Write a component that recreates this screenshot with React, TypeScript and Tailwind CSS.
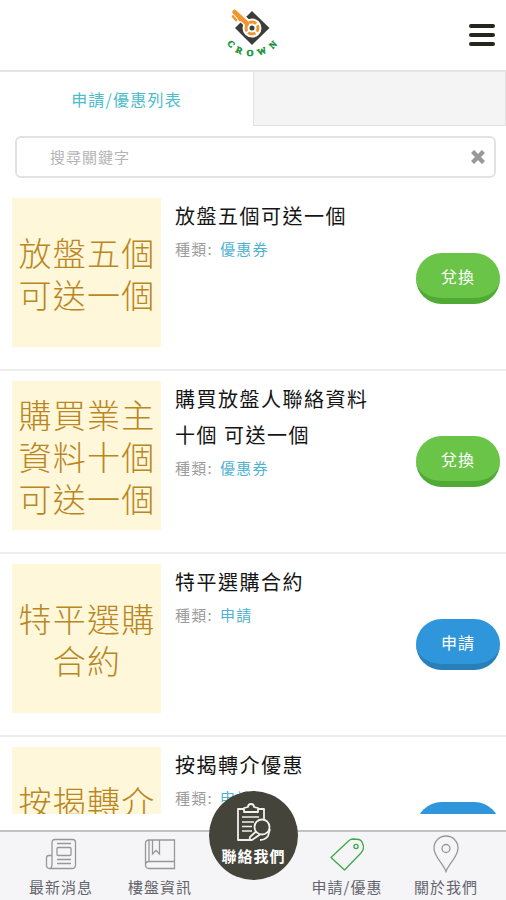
import React from 'react';
import clsx from 'clsx';

interface Offer {
  id: number;
  thumb: string[];
  title: string[];
  category: string;
  action: string;
  variant: 'green' | 'blue';
}

const offers: Offer[] = [
  { id: 1, thumb: ['放盤五個', '可送一個'], title: ['放盤五個可送一個'], category: '優惠券', action: '兌換', variant: 'green' },
  { id: 2, thumb: ['購買業主', '資料十個', '可送一個'], title: ['購買放盤人聯絡資料', '十個 可送一個'], category: '優惠券', action: '兌換', variant: 'green' },
  { id: 3, thumb: ['特平選購', '合約'], title: ['特平選購合約'], category: '申請', action: '申請', variant: 'blue' },
  { id: 4, thumb: ['按揭轉介', '優惠'], title: ['按揭轉介優惠'], category: '申請', action: '申請', variant: 'blue' },
];

const Logo: React.FC = () => (
  <svg width="60" height="50" viewBox="0 0 60 50" aria-label="Crown">
    <path d="M29 3 L46.500 20 L29 37 L12 20 Z" fill="#3c3c3a" />
    <g fill="none" stroke="#fff" strokeLinecap="round">
      <path d="M12 4 L24 15" strokeWidth="8" />
      <circle cx="29" cy="20" r="6" strokeWidth="7" />
    </g>
    <g fill="none" stroke="#f1962c">
      <path d="M11.500 4 L24 15.500" strokeWidth="4.500" strokeLinecap="round" />
      <path d="M10 8.500 L13 12 M14.500 8 L17 12" strokeWidth="2.600" strokeLinecap="round" />
      <circle cx="29" cy="20" r="6" strokeWidth="3" strokeDasharray="7.600 1.824" strokeDashoffset="3.800" />
    </g>
    <g fill="#15933a" fontFamily="'Liberation Serif', serif" fontWeight="700" fontSize="9" textAnchor="middle" stroke="#15933a" strokeWidth="0.5">
      <text transform="translate(6 38) rotate(48)">C</text>
      <text transform="translate(15 45) rotate(24)">R</text>
      <text transform="translate(27 48)">O</text>
      <text transform="translate(40 46) rotate(-22)">W</text>
      <text transform="translate(52 39) rotate(-45)">N</text>
    </g>
  </svg>
);

const NewsIcon: React.FC = () => (
  <svg width="32" height="32" viewBox="0 0 32 32" fill="none" stroke="#97979a" strokeWidth="1.3">
    <path d="M7 27V4.500Q7 1.500 10 1.500H27.500Q30.500 1.500 30.500 4.500V27Q30.500 30.500 27 30.500H4.500Q1.500 30.500 1.500 27V20Q1.500 17.500 4 17.500H7M7 26Q7 30.500 4.500 30.500" />
    <rect x="12" y="9.500" width="14" height="8" rx="1" />
    <path d="M12 5.500H26M12 21.500H26M12 25.500H26" />
  </svg>
);

const BookIcon: React.FC = () => (
  <svg width="32" height="32" viewBox="0 0 32 32" fill="none" stroke="#97979a" strokeWidth="1.3">
    <path d="M5 2H30.500V30.500H5Q1.500 30.500 1.500 27V5.500Q1.500 2 5 2ZM1.500 27Q1.500 23.500 5 23.500H30.500M5 2V23.500" />
    <path d="M8.500 2V16L12 12.500L15.500 16V2" />
  </svg>
);

const TagIcon: React.FC = () => (
  <svg width="34" height="34" viewBox="0 0 34 34" fill="none" stroke="#3da847" strokeWidth="1.3" strokeLinejoin="round">
    <path d="M1 20.500L19 3.500Q21 2 23 2L29 2.500Q31 3 32 5L33.500 9Q34 13 31 16L14.500 33Z" />
    <circle cx="26" cy="9.500" r="2.100" />
  </svg>
);

const PinIcon: React.FC = () => (
  <svg width="28" height="38" viewBox="0 0 28 38" fill="none" stroke="#97979a" strokeWidth="1.3">
    <path d="M14 36.500C11 28 2 22 2 13A12 12 0 0 1 26 13C26 22 17 28 14 36.500Z" />
    <circle cx="14" cy="13.500" r="4" />
  </svg>
);

const ClipboardIcon: React.FC = () => (
  <svg width="36" height="39" viewBox="0 0 36 39" fill="none" stroke="#f1f1ee" strokeWidth="1.8" strokeLinejoin="round">
    <path d="M8 6H2V37H16M22 6H28V16" />
    <path d="M8 9V5L12 4Q12 1 15 1T18 4L22 5V9Z" />
    <path d="M6 14H23M6 19H18M6 23.500H16M6 28H16" strokeWidth="1.700" />
    <circle cx="26" cy="24" r="7.500" />
    <path d="M20 28.500L14 34Q13 37 16 37L24 31.500M24 37Q29 37 32 33L34 26" />
  </svg>
);

const OfferRow: React.FC<{ offer: Offer }> = ({ offer }) => (
  <li className="flex h-[183px] shrink-0 border-b-2 border-[#ededee] pt-2.5 pl-3 pr-1.5">
    <div className="flex size-[149px] shrink-0 flex-col items-center justify-center bg-[#fff7da] text-[33px] leading-[42px] font-light tracking-[1.2px] text-[#b9861f]">
      {offer.thumb.map(line => (
        <span key={line} className="whitespace-nowrap pl-px">{line}</span>
      ))}
    </div>
    <div className="ml-3.5 flex-1">
      <h2 className="text-[20px] leading-9 tracking-[1.5px] whitespace-nowrap text-[#151515]">
        {offer.title.map(line => (
          <span key={line} className="block">{line}</span>
        ))}
      </h2>
      <p className="flex text-[15px] leading-[29px] tracking-[1.3px] text-[#9b9b9b]">
        <span className="w-[45px]">種類:</span>
        <span className="text-[#4eb2d2]">{offer.category}</span>
      </p>
    </div>
    <button
      className={clsx(
        'mt-[55px] h-[51px] w-[84px] shrink-0 rounded-[26px] border-b-[6px] text-base leading-none tracking-[1px] text-white',
        offer.variant === 'green' ? 'border-[#50ab36] bg-[#6ac447]' : 'border-[#2980b9] bg-[#3096db]'
      )}
    >
      {offer.action}
    </button>
  </li>
);

const navItems = [
  { label: '最新消息', icon: <NewsIcon />, width: 'w-[122px]' },
  { label: '樓盤資訊', icon: <BookIcon />, width: 'w-[76px]' },
  { label: '申請/優惠', icon: <TagIcon />, width: 'w-[88px]' },
  { label: '關於我們', icon: <PinIcon />, width: 'w-[110px]' },
];

const NavItem: React.FC<{ item: (typeof navItems)[number] }> = ({ item }) => (
  <a className={clsx('flex shrink-0 flex-col items-center', item.width)}>
    <span className="flex h-[43px] items-center justify-center">{item.icon}</span>
    <span className="text-[15px] leading-6 tracking-[1px] whitespace-nowrap">{item.label}</span>
  </a>
);

export default function App() {
  return (
    <div className="relative flex h-[900px] w-[506px] flex-col overflow-hidden bg-white font-['Noto_Sans_CJK_TC',sans-serif]">
      {/* Header */}
      <header className="grid h-[72px] shrink-0 grid-cols-[1fr_60px_1fr] border-b-2 border-[#e6e6e6] pt-2">
        <div />
        <Logo />
        <div className="flex flex-col items-end gap-[5px] pt-4 pr-[11px]">
          <span className="h-1 w-[26px] rounded-sm bg-[#25261b]" />
          <span className="h-1 w-[26px] rounded-sm bg-[#25261b]" />
          <span className="h-1 w-[26px] rounded-sm bg-[#25261b]" />
        </div>
      </header>

      {/* Tabs */}
      <div className="flex h-[54px] shrink-0">
        <div className="flex w-[253px] items-center justify-center text-base tracking-[1.2px] text-[#4bbccb]">
          申請/優惠列表
        </div>
        <div className="flex-1 border border-t-0 border-[#e2e2e2] bg-[#f4f4f4]" />
      </div>

      {/* Search */}
      <div className="mx-[15px] mt-2.5 flex h-[42px] w-[481px] shrink-0 items-center justify-between rounded-md border-2 border-[#e2e2e2] pr-[9px] pl-[33px]">
        <span className="text-[15px] tracking-[1px] text-[#b4b4b4]">搜尋關鍵字</span>
        <svg width="14" height="14" viewBox="0 0 14 14" stroke="#999" strokeWidth="4.4">
          <path d="M1.500 1.500L12.500 12.500M12.500 1.500L1.500 12.500" />
        </svg>
      </div>

      <ul className="mt-2.5 flex h-[626px] shrink-0 flex-col overflow-hidden">
        {offers.map(offer => (
          <OfferRow key={offer.id} offer={offer} />
        ))}
      </ul>

      {/* Bottom navigation */}
      <nav className="mt-4 flex flex-1 border-t-2 border-[#c1c2c5] bg-[#f5f5f8] text-[#64646c]">
        <NavItem item={navItems[0]} />
        <NavItem item={navItems[1]} />
        <div className="w-[105px] shrink-0" />
        <NavItem item={navItems[2]} />
        <NavItem item={navItems[3]} />
      </nav>

      <button className="absolute top-[791px] left-[209px] flex size-[89px] flex-col items-center rounded-full bg-[#45443a] pt-3 text-white">
        <ClipboardIcon />
        <span className="mt-0.5 text-[15px] leading-6 font-bold tracking-[1px] whitespace-nowrap">聯絡我們</span>
      </button>
    </div>
  );
}
